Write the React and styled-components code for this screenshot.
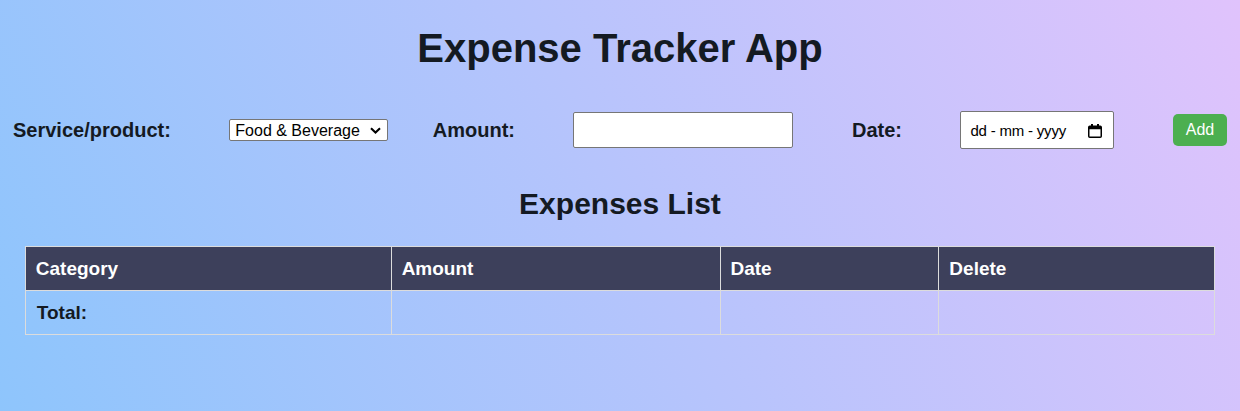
import React from "react";
import styled, { createGlobalStyle } from "styled-components";

const GlobalStyle = createGlobalStyle`
  html {
    margin: 0;
    min-height: 100%;
    background: linear-gradient(62deg, #8ec5fc 0%, #e0c3fc 100%);
  }
  body {
    margin: 0;
    font-family: "Liberation Sans", Arial, sans-serif;
    color: #141a22;
  }
`;

const Page = styled.div`
  background: linear-gradient(62deg, #8ec5fc 0%, #e0c3fc 100%);
  padding: 25px 0 25px;
`;

const Title = styled.h1`
  margin: 0;
  font-size: 40px;
  line-height: 46px;
  font-weight: 700;
  text-align: center;
`;

const Form = styled.form`
  display: flex;
  align-items: center;
  justify-content: space-between;
  margin-top: 40px;
  padding: 0 13px;
  height: 38px;
`;

const Label = styled.label`
  font-size: 20px;
  font-weight: 700;
`;

const chevron =
  "url(\"data:image/svg+xml,%3Csvg xmlns='http://www.w3.org/2000/svg' width='11' height='7' viewBox='0 0 11 7'%3E%3Cpath d='M1 1.2l4.5 4.3L10 1.2' fill='none' stroke='%23000' stroke-width='2.1'/%3E%3C/svg%3E\")";

const Select = styled.select`
  appearance: none;
  -webkit-appearance: none;
  box-sizing: border-box;
  width: 159px;
  height: 22px;
  padding: 0 20px 0 5px;
  font-family: "Liberation Sans", Arial, sans-serif;
  font-size: 16px;
  color: #000;
  background: #fff ${chevron} no-repeat right 6px center;
  border: 1px solid #767676;
  border-radius: 2px;
  margin-right: -14px;
`;

const TextInput = styled.input`
  box-sizing: border-box;
  width: 220px;
  height: 36px;
  font-family: "Liberation Sans", Arial, sans-serif;
  font-size: 16px;
  border: 1px solid #767676;
  border-radius: 2px;
  background: #fff;
  padding: 1px 8px;
`;

const DateBox = styled.label`
  box-sizing: border-box;
  display: inline-flex;
  align-items: center;
  width: 154px;
  height: 38px;
  padding: 0 11px 0 9px;
  border: 1px solid #767676;
  border-radius: 2px;
  background: #fff;
`;

const DateInput = styled.input`
  flex: 1;
  min-width: 0;
  border: none;
  outline: none;
  padding: 0;
  background: transparent;
  font-family: "Liberation Sans", Arial, sans-serif;
  font-size: 15px;
  letter-spacing: -0.2px;
  color: #000;
  &::placeholder {
    color: #000;
    opacity: 1;
  }
`;

const CalendarIcon = styled.svg`
  flex: none;
  width: 14px;
  height: 14px;
  margin-top: 1px;
`;

const AddButton = styled.button`
  width: 54px;
  height: 32px;
  border: none;
  border-radius: 5px;
  background: #4caf50;
  color: #fff;
  font-family: "Liberation Sans", Arial, sans-serif;
  font-size: 16px;
  cursor: pointer;
`;

const Subtitle = styled.h2`
  margin: 39px 0 0;
  font-size: 30px;
  line-height: 32px;
  font-weight: 700;
  text-align: center;
`;

const Table = styled.table`
  width: 96%;
  margin: 26px auto 0;
  border-collapse: collapse;
`;

const HeadCell = styled.th`
  height: 44px;
  box-sizing: border-box;
  background: #3d405b;
  color: #fff;
  text-align: left;
  font-size: 19px;
  font-weight: 700;
  padding: 0 10px;
  border: 1px solid #dcdcdc;
`;

const Cell = styled.td`
  height: 44px;
  box-sizing: border-box;
  text-align: left;
  font-size: 19px;
  font-weight: 700;
  padding: 0 11px;
  border: 1px solid #dcdcdc;
`;

export default function App() {
  return (
    <>
      <GlobalStyle />
      <Page>
        <Title>Expense Tracker App</Title>
        <Form onSubmit={(e) => e.preventDefault()}>
          <Label htmlFor="svc">Service/product:</Label>
          <Select id="svc" defaultValue="food">
            <option value="food">Food &amp; Beverage</option>
            <option value="travel">Travel</option>
            <option value="shopping">Shopping</option>
          </Select>
          <Label htmlFor="amt">Amount:</Label>
          <TextInput id="amt" type="number" />
          <Label htmlFor="dt">Date:</Label>
          <DateBox>
            <DateInput id="dt" type="text" placeholder="dd - mm - yyyy" />
            <CalendarIcon viewBox="0 0 14 14" aria-hidden="true">
              <path
                fillRule="evenodd"
                fill="#000"
                d="M3 0h2v1.5h4V0h2v1.5h1.2A1.8 1.8 0 0 1 14 3.3v8.9A1.8 1.8 0 0 1 12.2 14H1.8A1.8 1.8 0 0 1 0 12.2V3.3A1.8 1.8 0 0 1 1.8 1.5H3z M1.5 5.2v7.3h11V5.2z"
              />
            </CalendarIcon>
          </DateBox>
          <AddButton type="submit">Add</AddButton>
        </Form>
        <Subtitle>Expenses List</Subtitle>
        <Table>
          <colgroup>
            <col style={{ width: "30.76%" }} />
            <col style={{ width: "27.65%" }} />
            <col style={{ width: "18.4%" }} />
            <col style={{ width: "23.19%" }} />
          </colgroup>
          <thead>
            <tr>
              <HeadCell>Category</HeadCell>
              <HeadCell>Amount</HeadCell>
              <HeadCell>Date</HeadCell>
              <HeadCell>Delete</HeadCell>
            </tr>
          </thead>
          <tbody>
            <tr>
              <Cell>Total:</Cell>
              <Cell></Cell>
              <Cell></Cell>
              <Cell></Cell>
            </tr>
          </tbody>
        </Table>
      </Page>
    </>
  );
}
